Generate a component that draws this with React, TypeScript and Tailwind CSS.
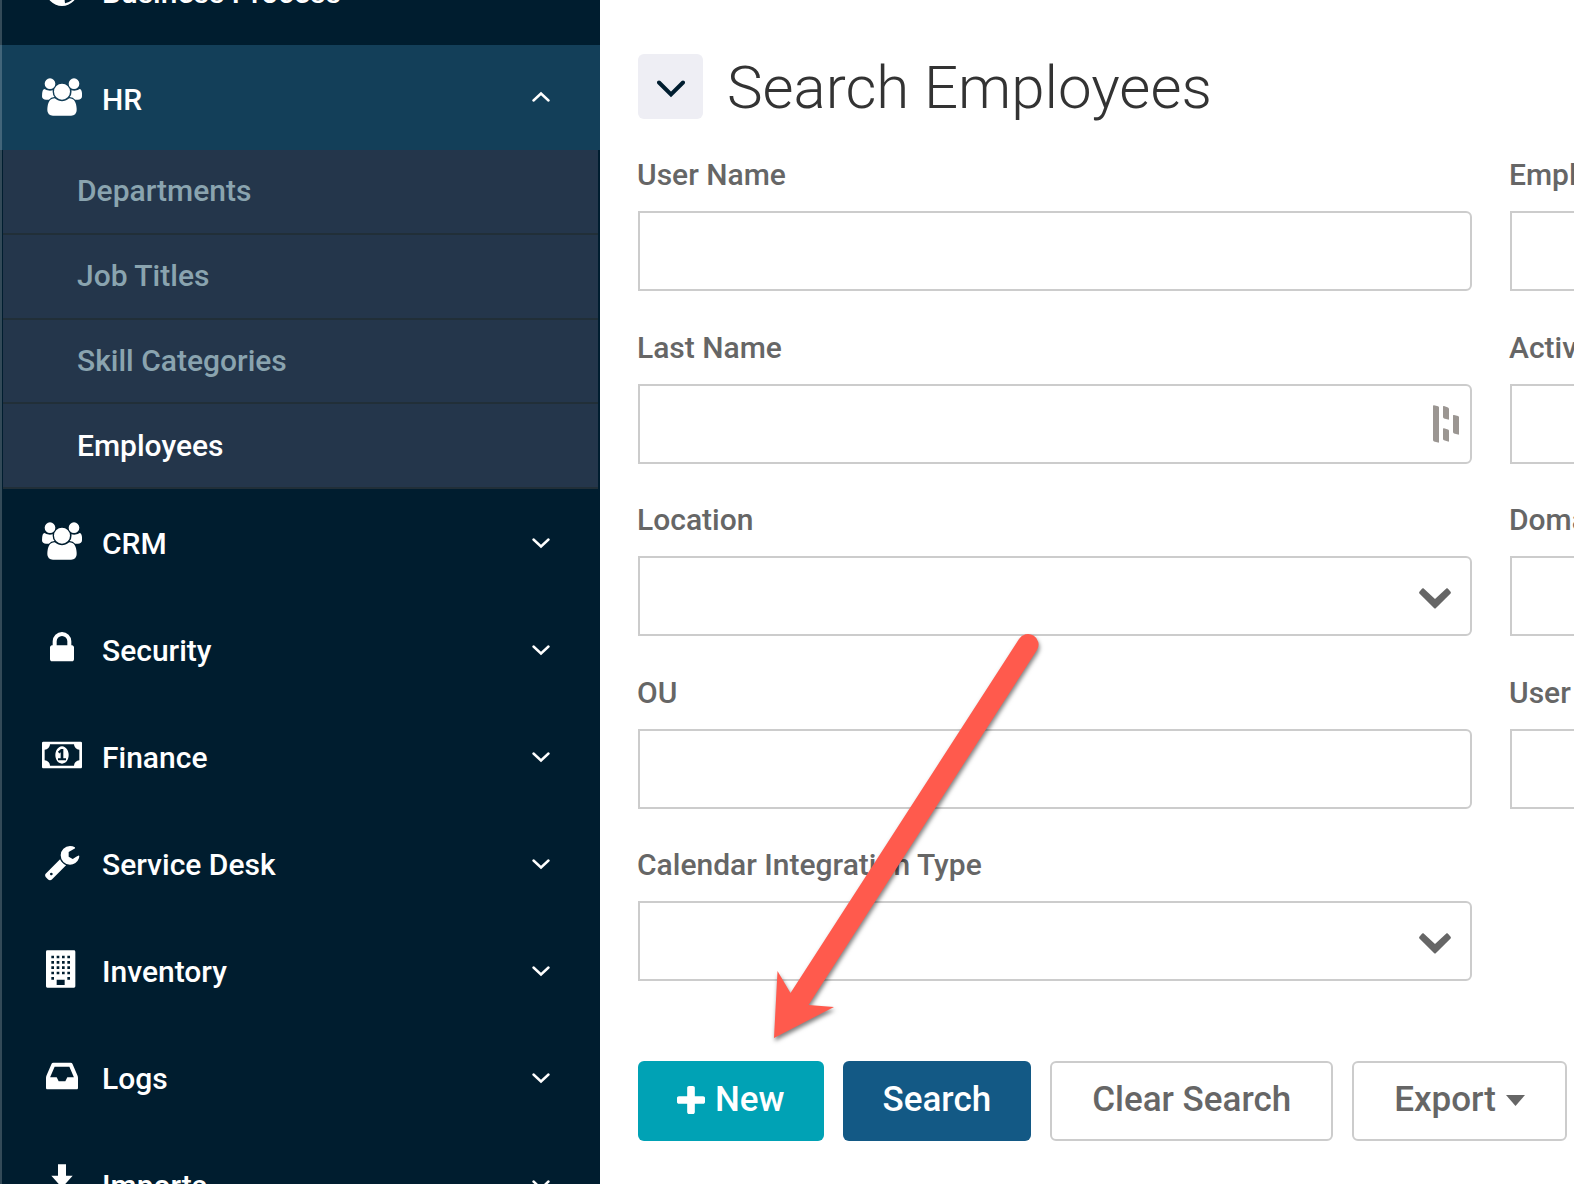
import React from "react";

const ICONS = {
  users: {
    box: "64 0 1920 1792",
    d: "M657 896q-162 5-265 128h-134q-82 0-138-40.5t-56-118.5q0-353 124-353 6 0 43.5 21t97.5 42.5 119 21.5q67 0 133-23-5 37-5 66 0 159 90 256zm1071 637q0 120-73 189.5t-194 69.5h-874q-121 0-194-69.5t-73-189.5q0-53 3.5-103.5t14-109 26.5-108.5 43-97.5 62-81 85.5-53.5 111.5-20q10 0 43 21.5t73 48 107 48 135 21.5 135-21.5 107-48 73-48 43-21.5q61 0 111.5 20t85.5 53.5 62 81 43 97.5 26.5 108.5 14 109 3.5 103.5zm-1024-1277q0 106-75 181t-181 75-181-75-75-181 75-181 181-75 181 75 75 181zm704 384q0 159-112.5 271.5t-271.5 112.5-271.5-112.5-112.5-271.5 112.5-271.5 271.5-112.5 271.5 112.5 112.5 271.5zm576 225q0 78-56 118.5t-138 40.5h-134q-103-123-265-128 90-97 90-256 0-29-5-66 66 23 133 23 59 0 119-21.5t97.5-42.5 43.5-21q124 0 124 353zm-128-609q0 106-75 181t-181 75-181-75-75-181 75-181 181-75 181 75 75 181z",
  },
  lock: {
    box: "-64 0 1920 1792",
    d: "M640 768h512v-192q0-106-75-181t-181-75-181 75-75 181v192zm832 96v576q0 40-28 68t-68 28h-960q-40 0-68-28t-28-68v-576q0-40 28-68t68-28h32v-192q0-184 132-316t316-132 316 132 132 316v192h32q40 0 68 28t28 68z",
  },
  money: {
    box: "0 0 1920 1792",
    d: "M768 1152h384v-96h-128v-448h-114l-148 137 77 80q42-37 55-57h2v288h-128v96zm512-256q0 70-21 142t-59.5 134-101.5 101-138 39-138-39-101.5-101-59.5-134-21-142 21-142 59.5-134 101.5-101 138-39 138 39 101.5 101 59.5 134 21 142zm512 256v-512q-106 0-181-75t-75-181h-1152q0 106-75 181t-181 75v512q106 0 181 75t75 181h1152q0-106 75-181t181-75zm128-832v1152q0 26-19 45t-45 19h-1792q-26 0-45-19t-19-45v-1152q0-26 19-45t45-19h1792q26 0 45 19t19 45z",
  },
  wrench: {
    box: "-64 0 1920 1792",
    d: "M448 1472q0-26-19-45t-45-19-45 19-19 45 19 45 45 19 45-19 19-45zm644-420l-682 682q-37 37-90 37-52 0-91-37l-106-108q-38-36-38-90 0-53 38-91l681-681q39 98 114.5 173.5t173.5 114.5zm634-435q0 39-23 106-47 134-164.5 217.5t-258.5 83.5q-185 0-316.5-131.5t-131.5-316.5 131.5-316.5 316.5-131.5q58 0 121.5 16.5t107.5 46.5q16 11 16 28t-16 28l-293 169v224l193 107q5-3 79-48.5t135.5-81 70.5-35.5q15 0 23.5 10t8.5 25z",
  },
  building: {
    box: "-192 0 1920 1792",
    d: "M64 0h1280q64 0 64 64v1664q0 64-64 64h-1280q-64 0-64-64v-1664q0-64 64-64zM256 256v128h128v-128zM512 256v128h128v-128zM768 256v128h128v-128zM1024 256v128h128v-128zM256 512v128h128v-128zM512 512v128h128v-128zM768 512v128h128v-128zM1024 512v128h128v-128zM256 768v128h128v-128zM512 768v128h128v-128zM768 768v128h128v-128zM1024 768v128h128v-128zM256 1024v128h128v-128zM512 1024v128h128v-128zM768 1024v128h128v-128zM1024 1024v128h128v-128zM256 1280v128h128v-128zM1024 1280v128h128v-128zM512 1408v256h384v-256z",
  },
  inbox: {
    box: "-64 0 1920 1792",
    d: "M1151 960h316q-1-3-2.5-8.5t-2.5-7.5l-212-496h-708l-212 496q-1 3-2.5 8.5t-2.5 7.5h316l95 192h320zm513 30v482q0 26-19 45t-45 19h-1408q-26 0-45-19t-19-45v-482q0-62 25-123l238-552q10-25 36.5-42t52.5-17h832q26 0 52.5 17t36.5 42l238 552q25 61 25 123z",
  },
  download: {
    box: "-64 0 1920 1792",
    d: "M704 0h384v544h320L896 1120L384 544h320zM128 1180h400l368 380 368-380h400v484h-1536z",
  },
  globe: {
    box: "-64 0 1920 1792",
    d: "M896 128a768 768 0 1 1 0 1536a768 768 0 0 1 0-1536zM1042 1535q220-42 390-207l-190-150q-60 30-130 80l-90 140z",
  },
};

type IconName = keyof typeof ICONS;

function MenuIcon({ name }: { name: IconName }) {
  const { box, d } = ICONS[name];
  return (
    <svg viewBox={box} className="mb-0.5 h-[38px] w-10 shrink-0" fill="currentColor" fillRule="evenodd" aria-hidden="true">
      <path d={d} />
    </svg>
  );
}

function Chevron({ up = false }: { up?: boolean }) {
  return (
    <svg viewBox="0 0 18 14" className="h-3.5 w-[18px]" fill="none" stroke="currentColor" strokeWidth="2.4" strokeLinecap="round" aria-hidden="true">
      <path d={up ? "M1.500 9.500L9 2.500L16.500 9.500" : "M1.500 4.500L9 11.500L16.500 4.500"} />
    </svg>
  );
}

function MenuRow({ icon, label, open = false }: { icon: IconName; label: string; open?: boolean }) {
  return (
    <button
      type="button"
      aria-expanded={open}
      className={
        open
          ? "flex h-[105px] w-full items-center bg-[#133f59] pr-[50px] pl-[42px] text-left text-white"
          : "flex h-[105px] w-full items-center pr-[50px] pl-[42px] text-left text-white"
      }
    >
      <MenuIcon name={icon} />
      <span className="ml-5 flex-1 pt-1 leading-9">{label}</span>
      <Chevron up={open} />
    </button>
  );
}

const SUBMENU = ["Departments", "Job Titles", "Skill Categories", "Employees"];

const MENU: { icon: IconName; label: string }[] = [
  { icon: "users", label: "CRM" },
  { icon: "lock", label: "Security" },
  { icon: "money", label: "Finance" },
  { icon: "wrench", label: "Service Desk" },
  { icon: "building", label: "Inventory" },
  { icon: "inbox", label: "Logs" },
  { icon: "download", label: "Imports" },
];

function Sidebar() {
  return (
    <nav className="relative h-screen w-[600px] shrink-0 overflow-hidden bg-[#001d2f] text-[30px] font-medium">
      <div className="-mt-[62px] flex flex-col gap-0.5">
        <MenuRow icon="globe" label="Business Process" />
        <div>
          <MenuRow icon="users" label="HR" open />
          <ul className="mr-0.5 ml-[3px] flex h-[339px] flex-col">
            {SUBMENU.map((item) => (
              <li key={item} className="flex-1 border-b-2 border-[#212f38] bg-[#24364b]">
                <a
                  href="#"
                  className={
                    item === "Employees"
                      ? "flex h-full items-center pb-px pl-[74px] text-white"
                      : "flex h-full items-center pb-px pl-[74px] text-[#8aa4af]"
                  }
                >
                  {item}
                </a>
              </li>
            ))}
          </ul>
        </div>
        <div className="-mt-0.5 flex flex-col gap-0.5">
          {MENU.map((m) => (
            <MenuRow key={m.label} icon={m.icon} label={m.label} />
          ))}
        </div>
      </div>
      <div className="absolute inset-y-0 left-0 w-0.5 bg-white/20" />
    </nav>
  );
}

const CONTROL = "block h-20 w-full appearance-none rounded-r-md border-2 border-[#cccccc] bg-white px-5";

function Field({ id, label, kind = "text" }: { id: string; label: string; kind?: "text" | "select" | "assist" }) {
  return (
    <div>
      <label htmlFor={id} className="mb-[18px] -ml-px block text-[30px] leading-9 font-medium whitespace-nowrap">
        {label}
      </label>
      <div className="relative">
        {kind === "select" ? (
          <select id={id} className={CONTROL} />
        ) : (
          <input id={id} type="text" className={CONTROL} />
        )}
        {kind === "select" && (
          <svg viewBox="0 0 32 21" className="pointer-events-none absolute top-8 right-[21px] h-[21px] w-8" fill="currentColor" aria-hidden="true">
            <path d="M4.4.3L16 11L27.600.3Q28.200 0 28.800.5L31.600 3.700Q32.200 4.600 31.600 5.400L17 20Q16 21 15 20L.4 5.400Q-.2 4.600.4 3.700L3.200.5Q3.800 0 4.400.3Z" />
          </svg>
        )}
        {kind === "assist" && (
          <svg viewBox="0 0 26 38" className="absolute top-[21px] right-[13px] h-[38px] w-[26px]" fill="#9b9692" aria-hidden="true">
            <path d="M0 1Q0 0 1 .200L5 1.300Q6 1.600 6 2.600V37Q6 38 5 37.600L1 36.400Q0 36 0 35ZM10 1.600Q10 .700 11 1L15 2.400Q16 3 16 4V14Q16 15 15 14.600L11 13.400Q10 13 10 12ZM10 24Q10 23 11 23.300L15 24.600Q16 25 16 26V36Q16 37 15 36.600L11 35.300Q10 35 10 34ZM20 10.600Q20 9.600 21 10L25 11Q26 11.400 26 12.400V29Q26 30 25 29.600L21 28.400Q20 28 20 27Z" />
          </svg>
        )}
      </div>
    </div>
  );
}

const BUTTON = "flex h-20 items-center rounded-md text-[35px] font-medium whitespace-nowrap pb-0.5";

export default function App() {
  return (
    <div className="flex h-screen overflow-hidden bg-white font-[Roboto,sans-serif] text-[#666666] antialiased">
      <Sidebar />
      <main className="relative min-w-0 flex-1 overflow-hidden pt-[54px] pl-[38px]">
        <header className="flex items-start gap-6">
          <button type="button" aria-label="Collapse search" className="flex size-[65px] items-center justify-center rounded-md bg-[#eeeef4] text-[#001d2f]">
            <svg viewBox="0 0 28 18" className="mt-1 h-[18px] w-7" fill="none" stroke="currentColor" strokeWidth="4" strokeLinecap="round" aria-hidden="true">
              <path d="M2 2.500L14 14.500L26 2.500" />
            </svg>
          </button>
          <h1 className="text-[60px] leading-[68px] font-light whitespace-nowrap text-[#333333]">Search Employees</h1>
        </header>

        <form className="mt-[35px]" onSubmit={(e) => e.preventDefault()}>
          <div className="flex gap-[38px]">
            <div className="flex min-h-[824px] w-[834px] shrink-0 flex-col justify-between">
              <Field id="user-name" label="User Name" />
              <Field id="last-name" label="Last Name" kind="assist" />
              <Field id="location" label="Location" kind="select" />
              <Field id="ou" label="OU" />
              <Field id="calendar" label="Calendar Integration Type" kind="select" />
            </div>
            <div className="flex min-h-[824px] w-[834px] shrink-0 flex-col justify-between">
              <Field id="employee-number" label="Employee Number" />
              <Field id="active" label="Active" />
              <Field id="domain" label="Domain" />
              <Field id="user-type" label="User Type" />
              <div className="h-[134px]" />
            </div>
          </div>

          <div className="mt-20 flex gap-[19px]">
            <button type="button" className={`${BUTTON} gap-2.5 bg-[#00a2b5] px-[39px] text-white`}>
              <svg viewBox="192 128 1408 1408" className="size-7" fill="currentColor" aria-hidden="true">
                <path d="M1600 736v192q0 40-28 68t-68 28h-416v416q0 40-28 68t-68 28h-192q-40 0-68-28t-28-68v-416h-416q-40 0-68-28t-28-68v-192q0-40 28-68t68-28h416v-416q0-40 28-68t68-28h192q40 0 68 28t28 68v416h416q40 0 68 28t28 68z" />
              </svg>
              New
            </button>
            <button type="submit" className={`${BUTTON} bg-[#135985] px-10 text-white`}>
              Search
            </button>
            <button type="reset" className={`${BUTTON} border-2 border-[#cccccc] px-10`}>
              Clear Search
            </button>
            <button type="button" className={`${BUTTON} gap-2.5 border-2 border-[#cccccc] px-10`}>
              Export
              <svg viewBox="0 0 19 11" className="h-[11px] w-[19px]" fill="currentColor" aria-hidden="true">
                <path d="M0 0H19L9.500 11Z" />
              </svg>
            </button>
          </div>
        </form>

        <svg
          viewBox="760 620 300 430"
          className="pointer-events-none absolute top-[620px] left-[160px] h-[430px] w-[300px] drop-shadow-[1px_3px_2px_rgba(0,0,0,0.5)]"
          fill="#ff5a4d"
          aria-hidden="true"
        >
          <path d="M774 1038L777.500 971L790.500 993L1019 639A10 10 0 0 1 1037 650L808.500 1005L834 1007Z" />
        </svg>
      </main>
    </div>
  );
}
